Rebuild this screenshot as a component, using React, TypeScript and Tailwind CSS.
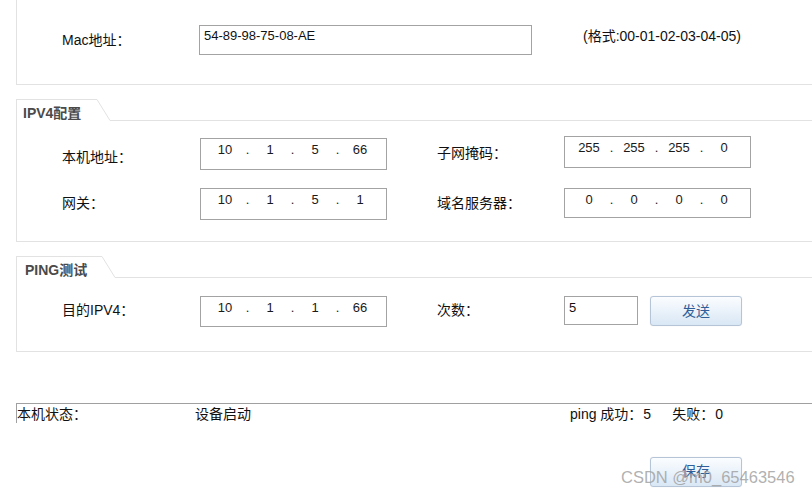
import React from "react";

const IpBox = ({ parts, className }: { parts: string[]; className: string }) => (
  <div className={`flex items-start border border-[#a3a3a3] bg-white pl-[6px] pt-[3px] text-[13px] leading-[16px] text-[#1a1a1a] ${className}`}>
    {parts.map((p, i) => (
      <React.Fragment key={i}>
        <span className="w-[36px] text-center">{p}</span>
        {i < parts.length - 1 && <span className="w-[9px] text-center">.</span>}
      </React.Fragment>
    ))}
  </div>
);

const Label = ({ text, className }: { text: string; className: string }) => (
  <div className={`text-[14px] leading-[20px] text-[#111111] ${className}`}>{text}</div>
);

const SectionHeader = ({ title, tabW, textPl }: { title: string; tabW: string; textPl: string }) => (
  <div className="flex h-[22px]">
    <div className={`${tabW} ${textPl} h-full border-l border-t border-[#e2e2e2] bg-white pt-[5px] text-[14px] font-bold leading-[16px] text-[#4a4a4a]`}>
      {title}
    </div>
    <svg width="13" height="22" className="shrink-0">
      <line x1="0" y1="0.5" x2="13" y2="21.5" stroke="#e2e2e2" strokeWidth="1" />
    </svg>
    <div className="h-full flex-1 border-b border-[#e2e2e2]" />
  </div>
);

const BlueButton = ({ text, className }: { text: string; className: string }) => (
  <div className={`flex w-[92px] items-center justify-center rounded-[3px] border border-[#b5c4d6] bg-gradient-to-b from-[#fbfdff] to-[#d9e7f5] text-[14px] text-[#2f5e98] shadow-[0_0_1px_rgba(0,0,0,0.15)] ${className}`}>
    {text}
  </div>
);

export default function App() {
  return (
    <div className="relative h-[495px] w-[812px] overflow-hidden bg-white font-[family-name:Liberation_Sans,Noto_Sans_CJK_SC,sans-serif] text-[#111111]">
      {/* Top panel */}
      <div className="ml-[16px] h-[85px] border-b border-l border-[#e2e2e2]">
        <div className="flex items-start pl-[45px] pt-[25px]">
          <Label text="Mac地址：" className="mt-[5px] w-[137px]" />
          <div className="h-[30px] w-[333px] border border-[#a3a3a3] pl-[4px] pt-[2px] text-[13px] leading-[16px]">
            54-89-98-75-08-AE
          </div>
          <div className="ml-[51px] mt-[1px] text-[14px] leading-[20px]">(格式:00-01-02-03-04-05)</div>
        </div>
      </div>

      {/* IPV4 */}
      <div className="ml-[16px] mt-[14px]">
        <SectionHeader title="IPV4配置" tabW="w-[81px]" textPl="pl-[6px]" />
        <div className="h-[121px] border-b border-l border-[#e2e2e2] pt-[15px]">
          <div className="flex h-[33px] items-start pl-[45px]">
            <Label text="本机地址：" className="mt-[11px] w-[138px]" />
            <IpBox parts={["10", "1", "5", "66"]} className="mt-[2px] h-[32px] w-[187px]" />
            <Label text="子网掩码：" className="ml-[50px] mt-[7px] w-[127px]" />
            <IpBox parts={["255", "255", "255", "0"]} className="h-[32px] w-[187px]" />
          </div>
          <div className="mt-[19px] flex h-[32px] items-start pl-[45px]">
            <Label text="网关：" className="mt-[5px] w-[138px]" />
            <IpBox parts={["10", "1", "5", "1"]} className="h-[32px] w-[187px]" />
            <Label text="域名服务器：" className="ml-[50px] mt-[5px] w-[127px]" />
            <IpBox parts={["0", "0", "0", "0"]} className="h-[30px] w-[187px]" />
          </div>
        </div>
      </div>

      {/* PING */}
      <div className="ml-[16px] mt-[14px]">
        <SectionHeader title="PING测试" tabW="w-[86px]" textPl="pl-[8px]" />
        <div className="h-[74px] border-b border-l border-[#e2e2e2] pt-[18px]">
          <div className="flex items-start pl-[45px]">
            <Label text="目的IPV4：" className="mt-[4px] w-[138px]" />
            <IpBox parts={["10", "1", "1", "66"]} className="h-[31px] w-[187px]" />
            <Label text="次数：" className="ml-[50px] mt-[4px] w-[127px]" />
            <div className="h-[29px] w-[74px] border border-[#a3a3a3] pl-[4px] pt-[3px] text-[13px] leading-[16px]">5</div>
            <BlueButton text="发送" className="ml-[12px] h-[30px]" />
          </div>
        </div>
      </div>

      {/* Status */}
      <div className="ml-[16px] mt-[51px] flex h-[20px] items-center border-l border-t border-[#a0a0a0] text-[14px] leading-[20px]">
        <div className="w-[178px]">本机状态：</div>
        <div className="w-[375px]">设备启动</div>
        <div className="flex">
          <span>ping 成功：</span>
          <span className="ml-[1px]">5</span>
          <span className="ml-[21px]">失败：</span>
          <span className="ml-[1px]">0</span>
        </div>
      </div>

      {/* Save */}
      <div className="mt-[34px] flex pl-[650px]">
        <BlueButton text="保存" className="h-[30px] items-start pt-[3px]" />
      </div>

      {/* Watermark */}
      <div className="absolute left-[621px] top-[466px] text-[16.5px] leading-[22px] text-[#9c9c9c]/80">
        CSDN @m0_65463546
      </div>
    </div>
  );
}
